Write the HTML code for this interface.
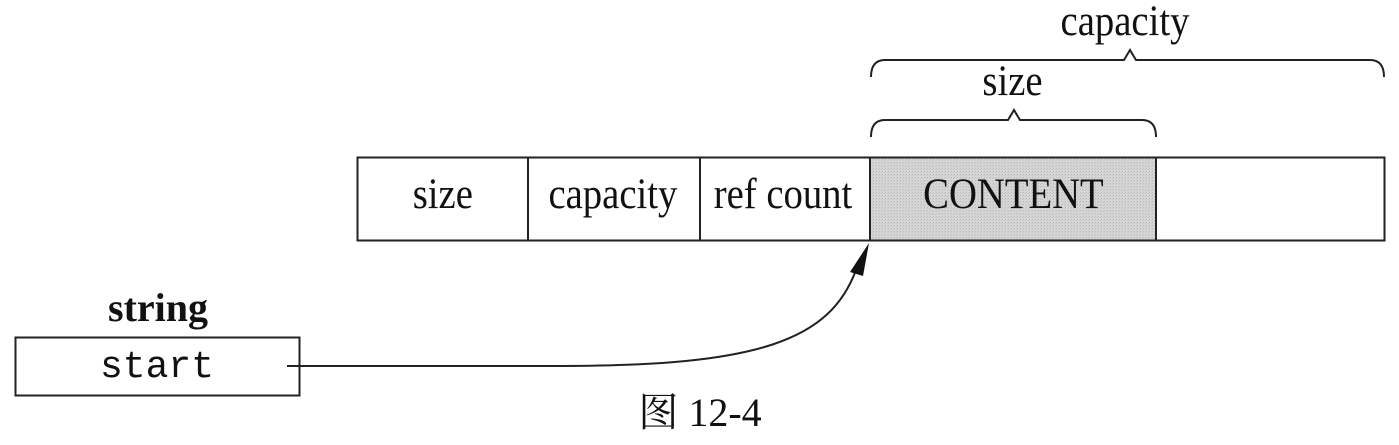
<!DOCTYPE html>
<html><head><meta charset="utf-8"><style>
html,body{margin:0;padding:0;background:#fff;width:1399px;height:445px;overflow:hidden}
svg text{font-family:"Liberation Serif","Noto Serif CJK SC",serif;fill:#111}
</style></head><body>
<svg width="1399" height="445" viewBox="0 0 1399 445" xmlns="http://www.w3.org/2000/svg">
<defs><pattern id="p" width="3" height="3" patternUnits="userSpaceOnUse"><rect width="3" height="3" fill="#d6d6d6"/><rect width="1" height="1" fill="#b8b8b8"/><rect x="2" y="1" width="1" height="1" fill="#c4c4c4"/></pattern></defs>
<rect x="870" y="157" width="286" height="84" fill="url(#p)"/>
<rect x="357.5" y="157.5" width="1027" height="83" fill="none" stroke="#222" stroke-width="2"/>
<g stroke="#222" stroke-width="2"><line x1="528" y1="157" x2="528" y2="241"/><line x1="700" y1="157" x2="700" y2="241"/><line x1="870" y1="157" x2="870" y2="241"/><line x1="1156" y1="157" x2="1156" y2="241"/></g>
<g font-size="43" text-anchor="middle" transform="scale(0.9,1)">
<text x="492" y="208">size</text>
<text x="681" y="208">capacity</text>
<text x="870" y="208">ref count</text>
<text x="1126" y="208">CONTENT</text>
<text x="1250" y="35">capacity</text>
<text x="1125" y="95">size</text>
</g>
<g fill="none" stroke="#222" stroke-width="2">
<path d="M871 77 Q871 60 885 60 L1124 60 L1130 50 L1136 60 L1370 60 Q1384 60 1384 77"/>
<path d="M871 137 Q871 120 885 120 L1008 120 L1014 110 L1020 120 L1142 120 Q1156 120 1156 137"/>
<rect x="15.5" y="337.5" width="284" height="58"/>
<path d="M287 366 L560 366 C760 366 830 340 856 270"/>
</g>
<path d="M869 243 L850 272 L863 276 Z" fill="#111"/>
<text x="158" y="321" font-size="40" font-weight="bold" text-anchor="middle">string</text>
<text x="157" y="377" font-size="38" text-anchor="middle" style="font-family:'Liberation Mono',monospace" fill="#333">start</text>
<text x="700" y="426" font-size="40" text-anchor="middle">图 12-4</text>
</svg>
</body></html>
